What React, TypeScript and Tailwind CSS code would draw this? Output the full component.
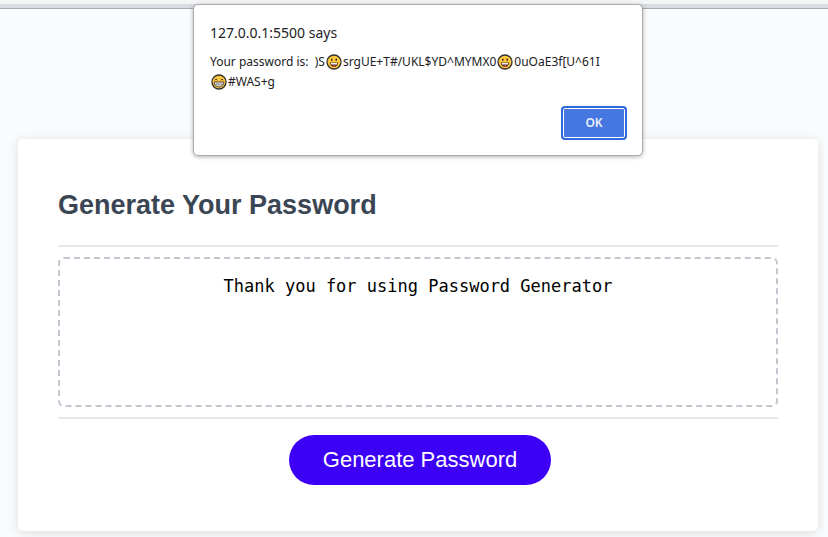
import React from "react";

type FaceProps = { label: string; beaming?: boolean };

function Face({ label, beaming = false }: FaceProps) {
  return (
    <svg
      role="img"
      aria-label={label}
      viewBox="0 0 16 16"
      className="mx-px inline-block h-4 w-4 align-[-4px]"
    >
      <circle cx="8" cy="8" r="7" fill="#ffc83d" stroke="#34302c" strokeWidth="1.3" />
      {beaming ? (
        <>
          <path d="M3.8 6.2 Q5.1 4.2 6.4 6.2 M9.6 6.2 Q10.9 4.2 12.2 6.2" fill="none" stroke="#4a3a22" strokeWidth="1" />
          <path d="M3.2 8 H12.8 Q12.4 13 8 13 Q3.6 13 3.2 8Z" fill="#f4f2ee" stroke="#4a3f38" strokeWidth="0.9" />
          <path d="M3.6 10.3 H12.4 M5.8 8 V12.4 M8 8 V13 M10.2 8 V12.4" stroke="#77716d" strokeWidth="0.6" />
        </>
      ) : (
        <>
          <ellipse cx="5.8" cy="5.8" rx="0.8" ry="1.3" fill="#3b3024" />
          <ellipse cx="10.2" cy="5.8" rx="0.8" ry="1.3" fill="#3b3024" />
          <path d="M3.8 8.6 H12.2 Q11.8 13 8 13 Q4.2 13 3.8 8.6Z" fill="#5b3d30" />
          <path d="M4.8 9 H11.2 L10.8 10.4 H5.2Z" fill="#f4f2ee" />
          <path d="M6.2 12.2 Q8 10.8 9.8 12.2 Q8 13.2 6.2 12.2Z" fill="#e8453c" />
        </>
      )}
    </svg>
  );
}

function AlertDialog() {
  return (
    <div className="absolute inset-x-0 top-1 flex justify-center pl-2">
      <div
        role="alertdialog"
        aria-labelledby="alert-title"
        aria-describedby="alert-message"
        className="flex w-[450px] flex-col rounded-[5px] border border-[#a9abad] bg-white pt-4 pr-[15px] pb-[15px] pl-4 font-['Noto_Sans','Open_Sans',sans-serif] text-[#202124] shadow-[0_1px_4px_rgba(0,0,0,0.3)]"
      >
        <h2 id="alert-title" className="text-sm leading-6">
          127.0.0.1:5500 says
        </h2>
        <p id="alert-message" className="mt-[7px] text-xs leading-5">
          Your password is:&nbsp; )S
          <Face label="grinning face" />
          srgUE+T#/UKL$YD^MYMX0
          <Face label="grinning face" />
          0uOaE3f[U^61I
          <br />
          <Face label="beaming face" beaming />
          #WAS+g
        </p>
        <button
          type="button"
          className="mt-[14px] h-[34px] w-[66px] self-end rounded-[4px] border-2 border-[#3069dc] bg-[#4677e0] text-xs font-semibold text-[#e9effc] shadow-[inset_0_0_0_1px_#ffffff]"
        >
          OK
        </button>
      </div>
    </div>
  );
}

export default function App() {
  return (
    <div className="relative min-h-screen bg-[#f9fbfd] font-['Liberation_Sans',Arial,sans-serif]">
      <div className="h-[9px] border-t-4 border-b border-t-[#f4f5f7] border-b-[#a9abb0] bg-[#dadce3]" />
      <main className="pt-[130px] pr-[10px] pb-1.5 pl-[18px]">
        <section className="rounded-[5px] bg-white px-10 pt-[46px] pb-[46px] shadow-[0_2px_12px_rgba(0,0,0,0.12)]">
          <h1 className="text-[27px] leading-10 font-bold text-[#3b4654]">Generate Your Password</h1>
          <div className="mt-5 border-y-2 border-[#e6e6e6] py-[10px]">
            <textarea
              readOnly
              aria-label="Your Secure Password"
              defaultValue="Thank you for using Password Generator"
              className="block h-[150px] w-full resize-none rounded-[6px] border-2 border-dashed border-[#c1c7cf] px-4 pt-[15px] text-center font-[Consolas,'DejaVu_Sans_Mono',monospace] text-[17px] leading-6 text-black outline-none"
            />
          </div>
          <div className="mt-4 flex justify-center pl-1">
            <button
              type="button"
              className="h-[50px] w-[262px] rounded-full bg-[#3c00f7] pb-0.5 text-[22px] text-white"
            >
              Generate Password
            </button>
          </div>
        </section>
      </main>
      <AlertDialog />
    </div>
  );
}
